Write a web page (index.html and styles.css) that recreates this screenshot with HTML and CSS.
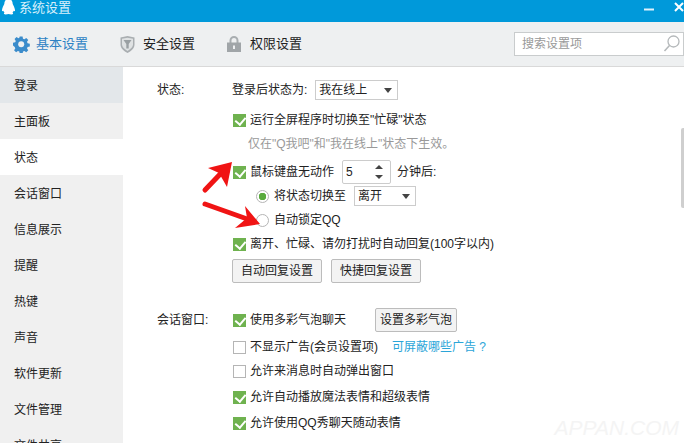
FILE: index.html
```html
<!DOCTYPE html>
<html lang="zh-CN">
<head>
    <meta charset="utf-8">
    <title>系统设置</title>
    <link rel="stylesheet" href="styles.css">
</head>
<body>
<div class="window">

    <div class="titleBar">
        <svg class="penguin" width="15" height="16" viewBox="0 0 15 16"><path d="M7.5 0C4.6 0 3.4 2.3 3.3 5 2.6 6.6 1.2 9 1 11c-.1 1.2.4 1.6 1.3.7.3.8.7 1.4 1.2 1.9C2.6 14.200 2.500 15.500 4.500 15.500c1.300 0 2.300-.4 3-.4s1.700.4 3 .4c2 0 1.900-1.300 1-1.900.5-.5.9-1.100 1.200-1.900.9.9 1.400.5 1.300-.7-.2-2-1.600-4.400-2.300-6C11.600 2.300 10.400 0 7.500 0z" fill="#fff"/></svg>
        <span class="titleText">系统设置</span>
        <span class="winButtons">
            <svg class="minBtn" width="10" height="3" viewBox="0 0 10 3"><rect width="10" height="2" y="0.500" fill="#dff2fb"/></svg>
            <svg width="10" height="10" viewBox="0 0 10 10"><path d="M1 1l8 8M9 1l-8 8" stroke="#fff" stroke-width="2"/></svg>
        </span>
    </div>

    <div class="toolBar">
        <div class="tab tabOn">
            <svg width="17" height="17" viewBox="0 0 17 17"><path d="M7 .5h3l.4 2.300 1.500.6 1.900-1.300 2.100 2.100-1.300 1.900.6 1.500 2.300.4v3l-2.300.4-.6 1.500 1.300 1.900-2.100 2.100-1.900-1.300-1.500.6-.4 2.300H7l-.4-2.300-1.500-.6-1.900 1.300-2.100-2.100 1.300-1.900-.6-1.500L0 10V7l2.300-.4.6-1.500L1.600 3.200l2.100-2.100 1.900 1.300 1-.6z" fill="#3b8ccb" transform="scale(.96)"/><circle cx="8.200" cy="8.200" r="3" fill="#eef0f1"/></svg>
            <span>基本设置</span>
        </div>
        <div class="tab">
            <svg width="15" height="17" viewBox="0 0 15 17"><path d="M.5 1.500 7.500 0l7 1.500v7c0 4-3.500 6.500-7 8.500-3.500-2-7-4.500-7-8.500z" fill="#a9aeb1"/><path d="M2 2.800 7.500 1.700 13 2.800v5.500c0 3-2.700 5-5.500 6.700C4.700 13.300 2 11.300 2 8.300z" fill="#dfe2e3"/><path d="M3.500 4h8L8.700 8v4.500H6.300V8z" fill="#9aa0a3"/></svg>
            <span>安全设置</span>
        </div>
        <div class="tab">
            <svg width="14" height="16" viewBox="0 0 14 16"><path d="M3.500 7V4.500a3.500 3.500 0 0 1 7 0V7" fill="none" stroke="#a9aeb1" stroke-width="2"/><rect y="6.500" width="14" height="9.500" fill="#a0a5a8"/><rect x="6" y="9.500" width="2" height="3.500" fill="#eef0f1"/></svg>
            <span>权限设置</span>
        </div>
        <div class="searchBox">
            <span>搜索设置项</span>
            <svg width="17" height="17" viewBox="0 0 17 17"><circle cx="10.500" cy="6.500" r="5.500" fill="none" stroke="#b4b8ba" stroke-width="1.300"/><path d="M6.500 10.500 1.500 16" stroke="#b4b8ba" stroke-width="1.500"/></svg>
        </div>
    </div>

    <div class="mainArea">
        <div class="sideNav">
            <div class="navItem navHover">登录</div>
            <div class="navItem">主面板</div>
            <div class="navItem navOn">状态</div>
            <div class="navItem">会话窗口</div>
            <div class="navItem">信息展示</div>
            <div class="navItem">提醒</div>
            <div class="navItem">热键</div>
            <div class="navItem">声音</div>
            <div class="navItem">软件更新</div>
            <div class="navItem">文件管理</div>
            <div class="navItem">文件共享</div>
        </div>

        <div class="content">
            <div class="section sectionStatus">
                <div class="sectionLabel">状态:</div>
                <div class="sectionBody">
                    <div class="row rowLogin">
                        <span>登录后状态为:</span>
                        <span class="select selectStatus">我在线上<i class="caret"></i></span>
                    </div>
                    <div class="row rowFull"><i class="check"></i><span>运行全屏程序时切换至"忙碌"状态</span></div>
                    <div class="note">仅在"Q我吧"和"我在线上"状态下生效。</div>
                    <div class="row rowIdle">
                        <i class="check"></i><span>鼠标键盘无动作</span>
                        <span class="spinner">5<span class="spinArrows"><i class="up"></i><i class="down"></i></span></span>
                        <span>分钟后:</span>
                    </div>
                    <div class="row subRow rowSwitch">
                        <i class="radio radioOn"></i><span>将状态切换至</span>
                        <span class="select selectAway">离开<i class="caret"></i></span>
                    </div>
                    <div class="row subRow rowLock"><i class="radio"></i><span>自动锁定QQ</span></div>
                    <div class="row rowReply"><i class="check"></i><span>离开、忙碌、请勿打扰时自动回复(100字以内)</span></div>
                    <div class="buttons">
                        <span class="btn">自动回复设置</span>
                        <span class="btn">快捷回复设置</span>
                    </div>
                </div>
            </div>

            <div class="section sectionChat">
                <div class="sectionLabel">会话窗口:</div>
                <div class="sectionBody">
                    <div class="row rowBubble">
                        <i class="check"></i><span class="bubbleText">使用多彩气泡聊天</span>
                        <span class="btn btnBubble">设置多彩气泡</span>
                    </div>
                    <div class="row rowChat"><i class="check checkOff"></i><span>不显示广告(会员设置项)</span><span class="link">可屏蔽哪些广告 ?</span></div>
                    <div class="row rowChat rowTight"><i class="check checkOff"></i><span>允许来消息时自动弹出窗口</span></div>
                    <div class="row rowChat"><i class="check"></i><span>允许自动播放魔法表情和超级表情</span></div>
                    <div class="row rowChat"><i class="check"></i><span>允许使用QQ秀聊天随动表情</span></div>
                    <div class="row rowChat"><i class="check"></i></div>
                </div>
            </div>

            <div class="scrollThumb"></div>
        </div>
    </div>

    <div class="watermark">APPAN.COM</div>

    <!-- red arrows drawn on top of the screenshot -->
    <svg class="arrows" width="684" height="443" viewBox="0 0 684 443">
        <path d="M205 190 226 168" stroke="#f01414" stroke-width="5" fill="none" stroke-linecap="round"/>
        <path d="M232 162 208 168 219 173 227 187z" fill="#f01414"/>
        <path d="M205 204 250 220" stroke="#f01414" stroke-width="5" fill="none" stroke-linecap="round"/>
        <path d="M260 224 245 206 247 218 235 228z" fill="#f01414"/>
    </svg>
</div>
</body>
</html>
```

FILE: styles.css
```css
*
{
    box-sizing: border-box;
}

html, body
{
    margin:   0;
    padding:  0;
    overflow: hidden;
}

body
{
    font-family: "Liberation Sans", "Noto Sans CJK SC", sans-serif;
    font-size:   12px;
    line-height: 14px;
    color:       #222;
}

i
{
    display: block;
}

.window
{
    position: relative;
    width:    684px;
    height:   443px;
    overflow: hidden;
    background-color: #fff;
}

.titleBar
{
    display:     flex;
    align-items: flex-start;
    height:      22px;
    background-color: #0099da;
    color:       #fff;
}

.penguin
{
    margin-left: 1px;
    margin-top:  -1px;
}

.titleText
{
    margin-left: 3px;
    font-size:   13px;
    line-height: 15px;
    color:       #d8f0fb;
}

.winButtons
{
    margin-left: auto;
    display:     flex;
    align-items: flex-end;
    gap:         20px;
    padding-top: 2px;
}

.minBtn
{
    margin-bottom: 1px;
}

.toolBar
{
    display:     flex;
    align-items: center;
    height:      45px;
    padding-left: 13px;
    background-color: #eef0f1;
    border-bottom: 1px solid #d9d9d9;
}

.tab
{
    display:     flex;
    align-items: center;
    gap:         8px;
    width:       107px;
    font-size:   13px;
    color:       #222;
}

.tab:nth-child(3)
{
    gap: 9px;
}

.tabOn
{
    gap:   6px;
    color: #2d82c4;
}

.searchBox
{
    margin-left: auto;
    margin-bottom: 1px;
    display:     flex;
    align-items: center;
    justify-content: space-between;
    width:       170px;
    height:      24px;
    padding:     0 3px 0 7px;
    background-color: #fff;
    border:      1px solid #c9cccd;
    color:       #999;
}

.mainArea
{
    display: flex;
}

.sideNav
{
    width: 123px;
    flex:  none;
    background-color: #f0f0f0;
}

.navItem
{
    height:      36px;
    padding-left: 14px;
    line-height: 38px;
    font-size:   12px;
}

.navHover
{
    background-color: #e3e7ea;
}

.navOn
{
    background-color: #fff;
}

.content
{
    position: relative;
    flex:     1;
    padding-top: 13px;
    padding-left: 34px;
}

.section
{
    display: flex;
}

.sectionChat
{
    margin-top: 24px;
}

.sectionLabel
{
    width: 75px;
    flex:  none;
    padding-top: 3px;
}

.sectionChat .sectionLabel
{
    padding-top: 6px;
}

.row
{
    display:     flex;
    align-items: center;
}

.rowLogin
{
    height: 20px;
    gap:    8px;
}

.rowFull
{
    margin-top: 10px;
    height:     20px;
}

.note
{
    margin-top:  4px;
    height:      20px;
    line-height: 20px;
    padding-left: 16px;
    color:       #999;
}

.rowIdle
{
    margin-top: 6px;
    height:     24px;
}

.subRow
{
    padding-left: 24px;
}

.rowSwitch
{
    margin-top: 2px;
    height:     20px;
}

.rowLock
{
    margin-top: 4px;
    height:     20px;
}

.rowReply
{
    margin-top: 4px;
    height:     20px;
}

.buttons
{
    display:    flex;
    gap:        9px;
    margin-top: 5px;
}

.rowBubble
{
    height: 26px;
}

.rowChat
{
    margin-top: 2px;
    height:     24px;
}

.rowTight
{
    margin-top: 0;
}

.bubbleText
{
    width: 125px;
}

.check
{
    position: relative;
    width:    13px;
    height:   13px;
    margin-left:  1px;
    margin-right: 4px;
    background-color: #6fb24f;
    flex:     none;
}

.check::after
{
    content:  "";
    position: absolute;
    left:     4px;
    top:      1px;
    width:    5px;
    height:   8px;
    border-right:  2px solid #fff;
    border-bottom: 2px solid #fff;
    transform: rotate(40deg);
}

.checkOff
{
    background-color: #fff;
    border:   1px solid #b5b5b5;
}

.checkOff::after
{
    display: none;
}

.radio
{
    width:    13px;
    height:   13px;
    margin-right: 5px;
    border-radius: 50%;
    border:   1px solid #b5b5b5;
    background-color: #fff;
    flex:     none;
}

.radioOn
{
    background: radial-gradient(circle, #5aab3e 0, #5aab3e 3.500px, #fff 4px);
}

.select
{
    display:     flex;
    align-items: center;
    justify-content: space-between;
    height:      20px;
    padding:     0 5px 0 3px;
    background-color: #fff;
    border:      1px solid #ccc;
}

.selectStatus
{
    width: 83px;
}

.selectAway
{
    width: 62px;
    margin-left: 8px;
}

.caret
{
    width:  0;
    height: 0;
    border-left:  4px solid transparent;
    border-right: 4px solid transparent;
    border-top:   5px solid #444;
}

.spinner
{
    display:     flex;
    align-items: center;
    justify-content: space-between;
    width:       49px;
    height:      24px;
    margin:      0 6px 0 8px;
    padding:     0 7px 0 3px;
    border:      1px solid #ccc;
    border-radius: 2px;
}

.spinArrows
{
    display: flex;
    flex-direction: column;
    gap:     6px;
}

.up
{
    width: 0;
    height: 0;
    border-left:  4px solid transparent;
    border-right: 4px solid transparent;
    border-bottom: 4px solid #444;
}

.down
{
    width: 0;
    height: 0;
    border-left:  4px solid transparent;
    border-right: 4px solid transparent;
    border-top:   4px solid #444;
}

.btn
{
    display:     inline-block;
    height:      24px;
    padding:     0 8px;
    line-height: 22px;
    background-color: #f3f3f3;
    border:      1px solid #bcbcbc;
    border-radius: 2px;
}

.btnBubble
{
    padding: 0 4px;
}

.link
{
    margin-left: 14px;
    color:       #2ba5d8;
}

.scrollThumb
{
    position: absolute;
    right:    0;
    top:      61px;
    width:    3px;
    height:   80px;
    border-radius: 2px 0 0 2px;
    background-color: #cfcfcf;
}

.watermark
{
    position: absolute;
    right:    5px;
    bottom:   4px;
    font-size:   21px;
    line-height: 22px;
    font-style:  italic;
    color:       #f4f4f4;
}

.arrows
{
    position: absolute;
    left:     0;
    top:      0;
    pointer-events: none;
}
```
